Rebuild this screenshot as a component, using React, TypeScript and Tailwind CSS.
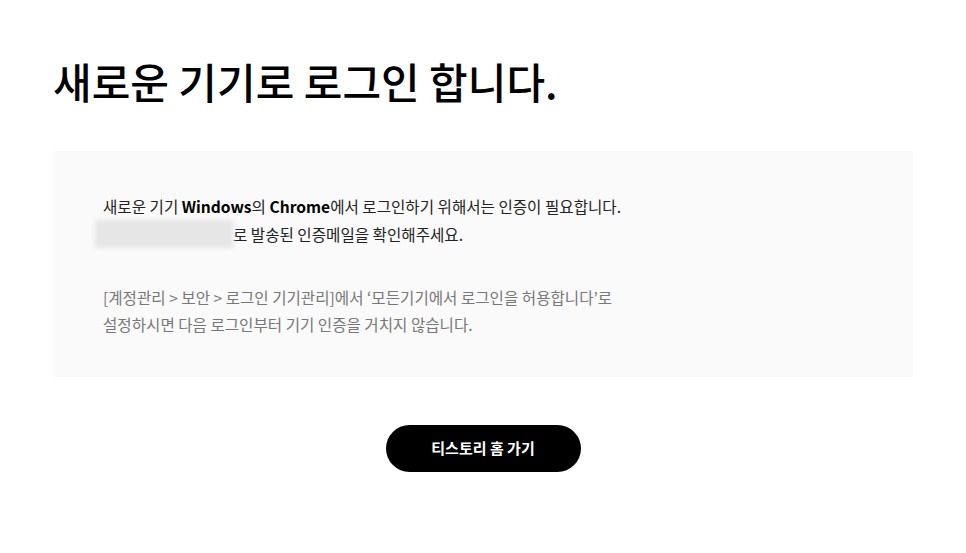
export default function App() {
  return (
    <div className="min-h-screen bg-white font-['Noto_Sans_CJK_KR','Noto_Sans',sans-serif] text-black">
      <div className="mx-auto w-[860px] pt-[51px]">
        <h1 className="text-[42px] leading-[60px] font-medium">새로운 기기로 로그인 합니다.</h1>

        <div className="mt-[40px] bg-[#fafafa] pt-[42px] pb-[39px] pl-[50px]">
          <div className="text-[15.6px] leading-[27px] text-[#222]">
            <p>
              새로운 기기 <b className="font-semibold text-black">Windows</b>의{' '}
              <b className="font-semibold text-black">Chrome</b>에서 로그인하기 위해서는 인증이 필요합니다.
            </p>
            <p className="flex items-center">
              <span className="-ml-[8px] h-[28px] w-[138px] bg-[#e6e6e6] blur-[2px]" />
              <span>로 발송된 인증메일을 확인해주세요.</span>
            </p>
          </div>
          <div className="mt-[36px] text-[15.6px] leading-[27px] text-[#777]">
            <p>[계정관리 &gt; 보안 &gt; 로그인 기기관리]에서 ‘모든기기에서 로그인을 허용합니다’로</p>
            <p>설정하시면 다음 로그인부터 기기 인증을 거치지 않습니다.</p>
          </div>
        </div>

        <div className="mt-[48px] flex justify-center">
          <button className="h-[47px] w-[195px] rounded-full bg-black text-[15px] font-semibold text-white">
            티스토리 홈 가기
          </button>
        </div>
      </div>
    </div>
  )
}
